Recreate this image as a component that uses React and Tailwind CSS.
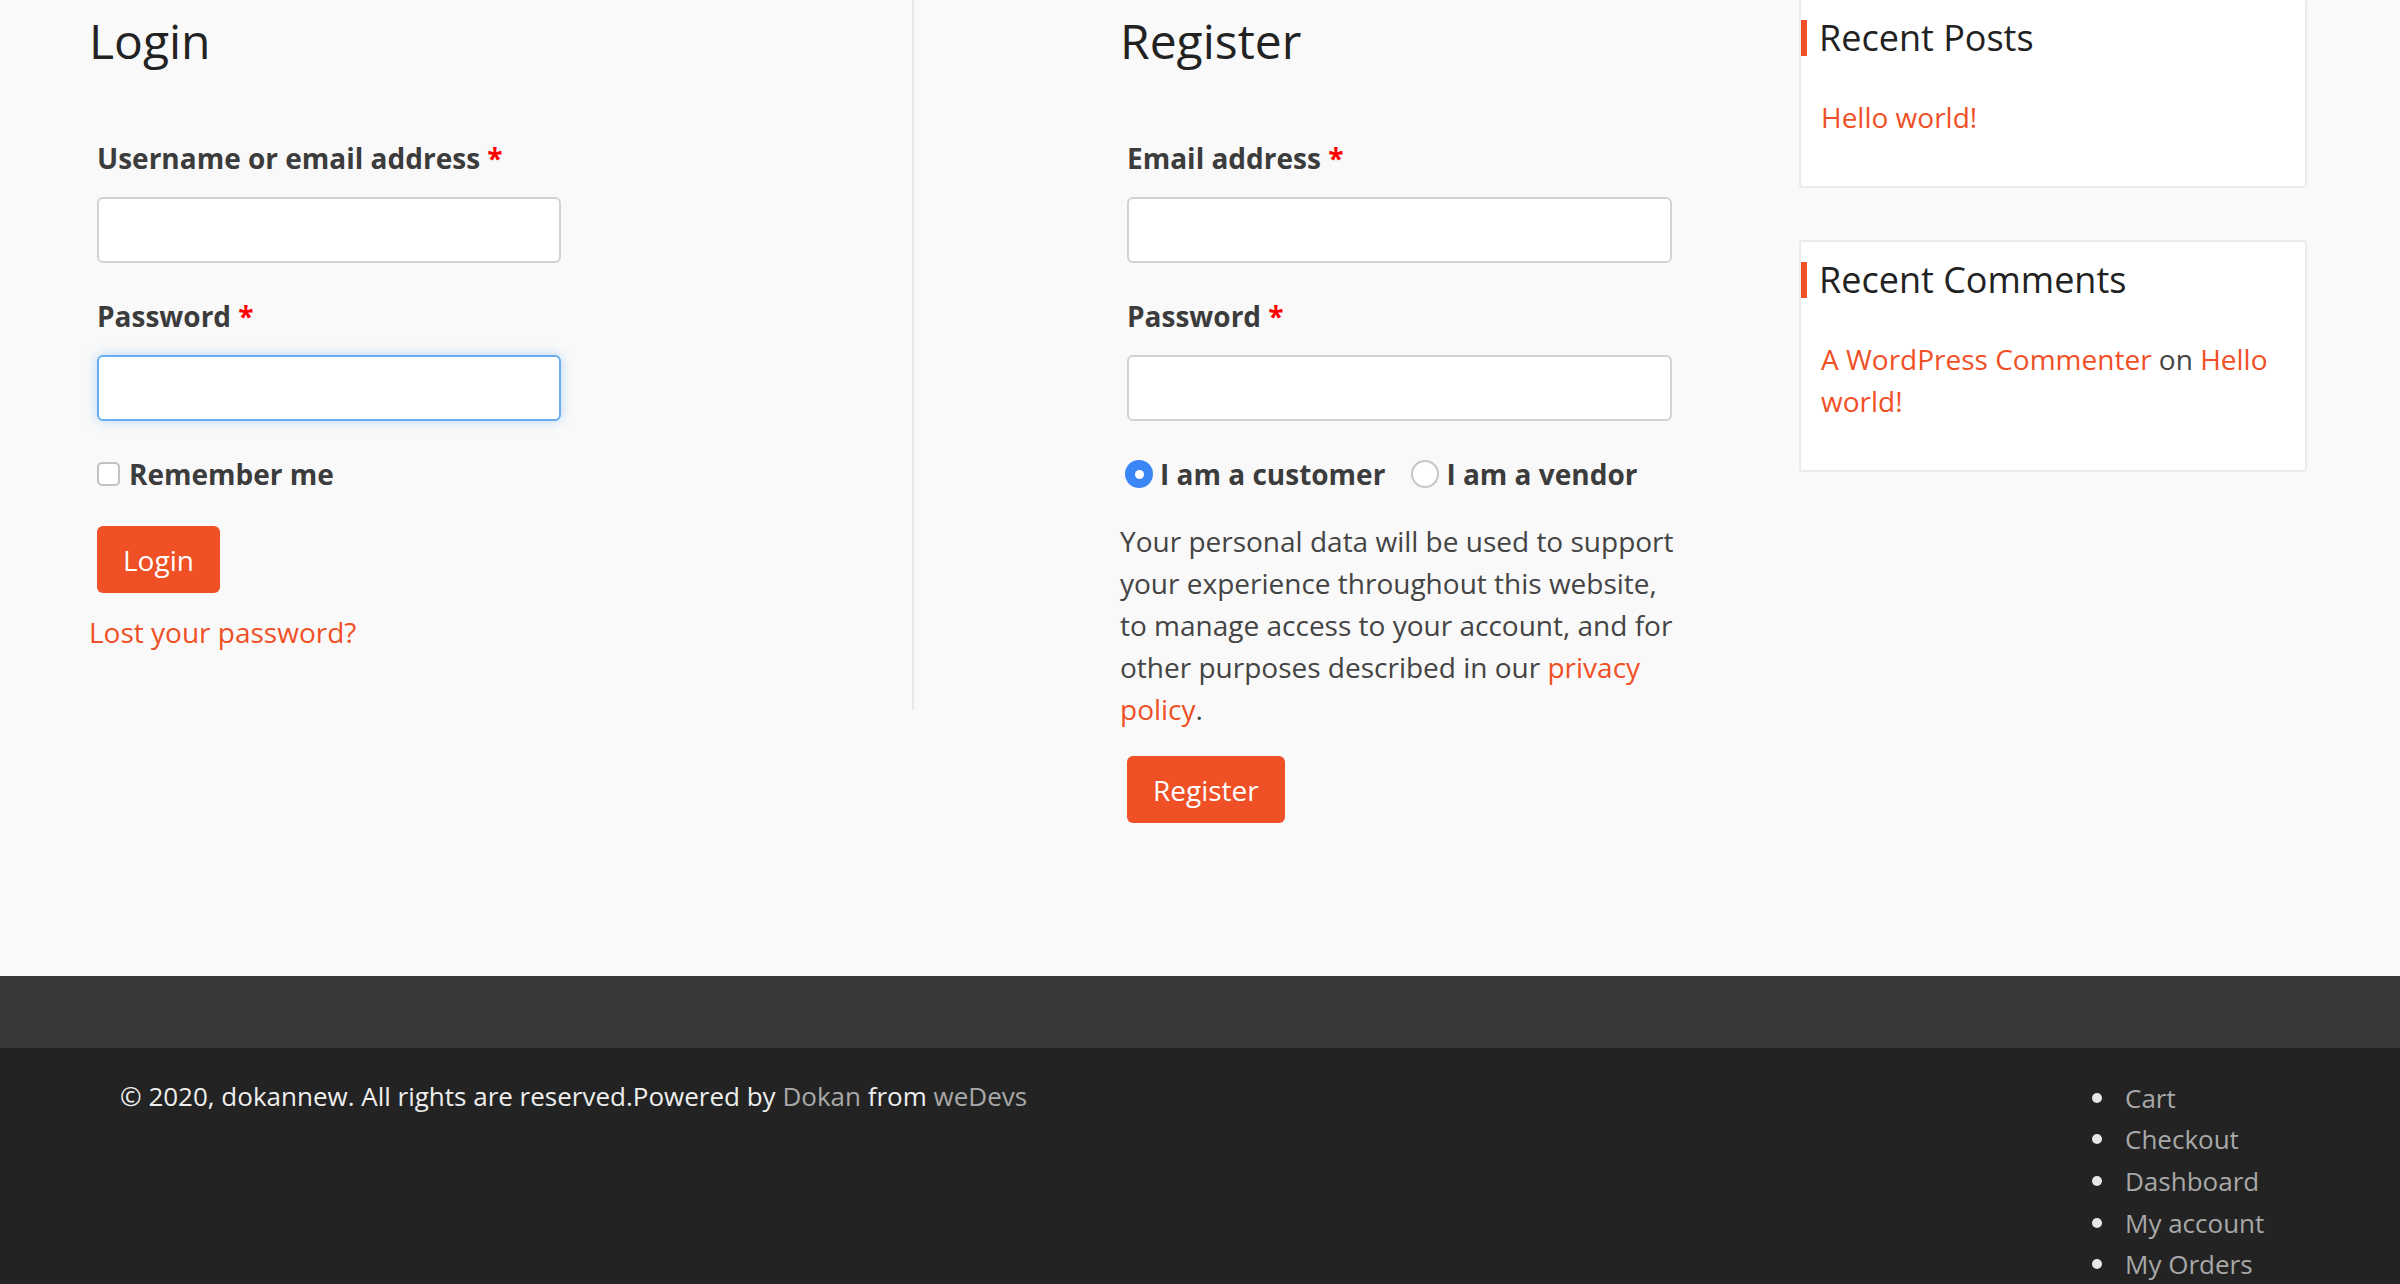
const ORANGE = "text-[#f05025]";

const Label = ({ children, className = "" }) => (
  <label className={`block text-[28px] leading-[42px] font-bold text-[#3c3c3c] ${className}`}>
    {children} <span className="text-[#ff0000]">*</span>
  </label>
);

const Widget = ({ title, className = "", children }) => (
  <section className={`rounded-[3px] border-2 border-[#ebebeb] bg-white pt-[20px] pb-[48px] pl-[20px] pr-[20px] ${className}`}>
    <h3 className="-ml-[20px] border-l-[6px] border-[#f05025] pl-[12px] text-[36px] leading-[36px] font-normal text-[#222]">
      {title}
    </h3>
    <div className="mt-[40px] text-[28px] leading-[42px] text-[#444]">{children}</div>
  </section>
);

const footerLinks = ["Cart", "Checkout", "Dashboard", "My account", "My Orders"];

export default function App() {
  return (
    <div className="min-h-screen bg-[#f9f9f9] font-['Open_Sans',sans-serif]">
      {/* main content */}
      <div className="flex items-start pb-[153px]">
        {/* Login column */}
        <div className="ml-[89px] h-[710px] w-[825px] border-r-2 border-[#e8e8e8] pt-[12px]">
          <h2 className="text-[48px] leading-[58px] font-normal text-[#222]">Login</h2>
          <form className="pl-[8px]">
            <Label className="mt-[67px]">Username or email address</Label>
            <input type="text" className="mt-[18px] block h-[66px] w-[464px] rounded-[6px] border-2 border-[#d2d2d2] bg-white" />
            <Label className="mt-[32px]">Password</Label>
            <input
              type="password"
              className="mt-[18px] block h-[66px] w-[464px] rounded-[6px] border-2 border-[#66aeef] bg-white shadow-[0_0_12px_rgba(102,174,239,0.45)]"
            />
            <div className="mt-[32px] flex h-[42px] items-center">
              <span className="h-[24px] w-[23px] rounded-[5px] border-2 border-[#c2c2c2] bg-white" />
              <span className="ml-[9px] text-[28px] leading-[42px] font-bold text-[#3c3c3c]">Remember me</span>
            </div>
            <button type="button" className="mt-[31px] block h-[67px] rounded-[6px] bg-[#f05025] px-[26px] text-[28px] leading-[42px] text-white">
              Login
            </button>
          </form>
          <p className={`mt-[18px] text-[28px] leading-[42px] ${ORANGE}`}>Lost your password?</p>
        </div>

        {/* Register column */}
        <div className="ml-[206px] w-[557px] pt-[12px]">
          <h2 className="text-[48px] leading-[58px] font-normal text-[#222]">Register</h2>
          <form>
            <div className="pl-[7px]">
              <Label className="mt-[67px]">Email address</Label>
              <input type="email" className="mt-[18px] block h-[66px] w-[545px] rounded-[6px] border-2 border-[#d2d2d2] bg-white" />
              <Label className="mt-[32px]">Password</Label>
              <input type="password" className="mt-[18px] block h-[66px] w-[545px] rounded-[6px] border-2 border-[#d2d2d2] bg-white" />
              <div className="mt-[32px] -ml-[2px] flex h-[42px] items-center text-[28px] leading-[42px] font-bold text-[#3c3c3c]">
                <span className="flex h-[28px] w-[28px] items-center justify-center rounded-full bg-[#3a86f6]">
                  <span className="h-[9px] w-[9px] rounded-full bg-white" />
                </span>
                <span className="ml-[7px]">I am a customer</span>
                <span className="ml-[26px] h-[28px] w-[28px] rounded-full border-2 border-[#c6c6c6] bg-white" />
                <span className="ml-[7px]">I am a vendor</span>
              </div>
            </div>
            <p className="mt-[25px] text-[28px] leading-[42px] text-[#444]">
              Your personal data will be used to support your experience throughout this website, to manage access to
              your account, and for other purposes described in our <span className={ORANGE}>privacy policy</span>.
            </p>
            <button type="button" className="mt-[26px] ml-[7px] block h-[67px] rounded-[6px] bg-[#f05025] px-[26px] text-[28px] leading-[42px] text-white">
              Register
            </button>
          </form>
        </div>

        {/* Sidebar */}
        <aside className="-mt-[2px] ml-[122px] w-[508px]">
          <Widget title="Recent Posts">
            <span className={ORANGE}>Hello world!</span>
          </Widget>
          <Widget title="Recent Comments" className="mt-[52px]">
            <span className={ORANGE}>A WordPress Commenter</span> on <span className={ORANGE}>Hello world!</span>
          </Widget>
        </aside>
      </div>

      {/* footer */}
      <footer>
        <div className="h-[72px] bg-[#393939]" />
        <div className="flex h-[236px] items-start justify-between bg-[#232323] pl-[120px]">
          <p className="mt-[27px] text-[26px] leading-[42px] text-[#eeeeee]">
            © 2020, dokannew. All rights are reserved.Powered by <span className="text-[#a8a8a8]">Dokan</span> from{" "}
            <span className="text-[#a8a8a8]">weDevs</span>
          </p>
          <ul className="mt-[29px] w-[308px]">
            {footerLinks.map((l) => (
              <li key={l} className="flex h-[41.6px] items-center text-[26px] leading-[42px] text-[#a8a8a8]">
                <span className="h-[10px] w-[10px] rounded-full bg-[#e6e6e6]" />
                <span className="ml-[23px]">{l}</span>
              </li>
            ))}
          </ul>
        </div>
      </footer>
    </div>
  );
}
